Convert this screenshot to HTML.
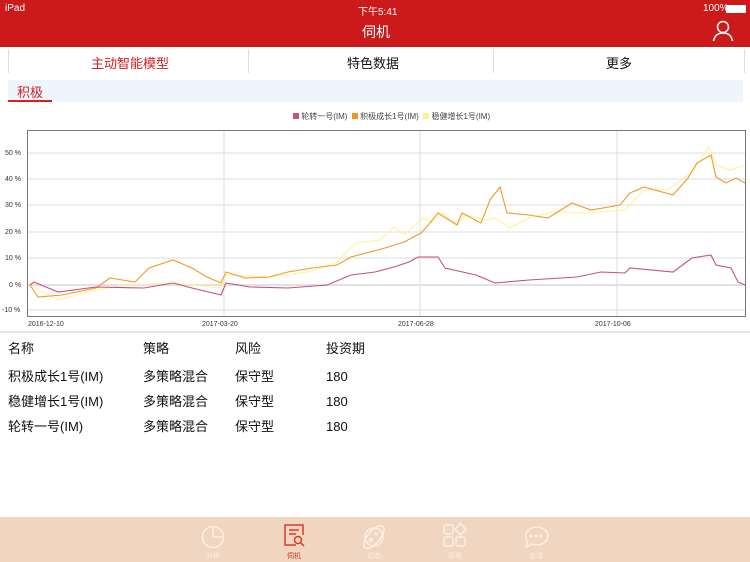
<!DOCTYPE html><html><head><meta charset="utf-8"><style>
*{margin:0;padding:0;box-sizing:border-box}
body{width:750px;height:562px;overflow:hidden;background:#fff;font-family:"Liberation Sans","Noto Sans CJK SC",sans-serif;position:relative;color:#111}
.a{position:absolute;white-space:nowrap}
</style></head><body>
<div class="a" style="left:0;top:0;width:750px;height:47px;background:#cc1a1a"></div>
<div class="a" style="left:5px;top:3px;font-size:10px;color:#fff">iPad</div>
<div class="a" style="left:358px;top:3px;font-size:10px;color:#fff">下午5:41</div>
<div class="a" style="left:703px;top:3px;font-size:10px;color:#fff">100%</div>
<div class="a" style="left:726px;top:5px;width:20px;height:8px;background:#fff;border-radius:1px"></div>
<div class="a" style="left:362px;top:22px;font-size:14px;color:#fff">伺机</div>
<svg class="a" style="left:712px;top:20px" width="22" height="22" viewBox="0 0 22 22" fill="none" stroke="#fff" stroke-width="1.5"><circle cx="11" cy="7" r="5.5"/><path d="M1.5 21 Q3 13 11 13 Q19 13 20.5 21"/></svg>
<div class="a" style="left:8px;top:49px;width:737px;height:24px;border-left:1px solid #ddd;border-right:1px solid #ddd"></div>
<div class="a" style="left:248px;top:49px;width:1px;height:24px;background:#ddd"></div>
<div class="a" style="left:493px;top:49px;width:1px;height:24px;background:#ddd"></div>
<div class="a" style="left:91px;top:53px;font-size:13px;color:#d42020">主动智能模型</div>
<div class="a" style="left:347px;top:53px;font-size:13px">特色数据</div>
<div class="a" style="left:606px;top:53px;font-size:13px">更多</div>
<div class="a" style="left:8px;top:80px;width:735px;height:22px;background:#eff5fc"></div>
<div class="a" style="left:17px;top:82px;font-size:13px;color:#d42020">积极</div>
<div class="a" style="left:8px;top:100px;width:44px;height:2px;background:#d42020"></div>
<div class="a" style="left:293px;top:111px;font-size:8px;color:#444"><span style="display:inline-block;width:6px;height:6px;background:#c8507d"></span> 轮转一号(IM) &nbsp;<span style="display:inline-block;width:6px;height:6px;background:#f0961e"></span> 积极成长1号(IM) &nbsp;<span style="display:inline-block;width:6px;height:6px;background:#fff08a"></span> 稳健增长1号(IM)</div>
<svg class="a" style="left:0;top:0" width="750" height="335">
<g stroke="#ddd" stroke-width="1"><line x1="27" y1="153" x2="745" y2="153"/><line x1="27" y1="179" x2="745" y2="179"/><line x1="27" y1="205" x2="745" y2="205"/><line x1="27" y1="232" x2="745" y2="232"/><line x1="27" y1="258" x2="745" y2="258"/><line x1="27" y1="310" x2="745" y2="310"/><line x1="224" y1="131" x2="224" y2="316"/><line x1="420" y1="131" x2="420" y2="316"/><line x1="617" y1="131" x2="617" y2="316"/></g>
<line x1="27" y1="285" x2="745" y2="285" stroke="#e2e2e2" stroke-width="2"/>
<rect x="27.5" y="130.5" width="718" height="186" fill="none" stroke="#777"/>
<line x1="0" y1="332" x2="750" y2="332" stroke="#ccc"/>
<g font-size="7" fill="#333" font-family="Liberation Sans"><text x="5" y="155">50 %</text><text x="5" y="181">40 %</text><text x="5" y="207">30 %</text><text x="5" y="234">20 %</text><text x="5" y="260">10 %</text><text x="9" y="287">0 %</text><text x="2" y="312">-10 %</text>
<text x="28" y="326">2016-12-10</text><text x="202" y="326">2017-03-20</text><text x="398" y="326">2017-06-28</text><text x="595" y="326">2017-10-06</text></g>
<g fill="none" stroke-width="1.1">
<polyline stroke="#fff29a" points="30,285 58,300 96,290 125,285 173,283 221,288 226,275 269,277 308,272 337,262 356,243 380,240 394,227 404,235 423,218 433,222 442,213 457,225 466,215 486,220 495,218 510,228 529,218 553,212 591,213 625,210 644,190 668,190 692,172 709,147 716,165 731,170 745,165"/>
<polyline stroke="#f09a2a" points="30,285 38,297 62,295 96,288 110,278 135,282 149,268 173,260 192,268 207,277 221,283 226,272 245,278 269,277 288,272 312,268 337,265 351,257 385,248 404,242 421,233 430,223 438,213 457,225 462,213 481,223 490,200 500,187 507,213 529,215 548,218 572,203 591,210 620,205 630,193 644,187 673,195 688,178 697,163 711,155 716,177 726,183 736,178 745,183"/>
<polyline stroke="#c8507d" points="30,285 34,282 58,292 96,287 144,288 173,283 192,288 221,295 226,283 250,287 288,288 327,285 351,275 375,272 394,267 409,262 418,257 438,257 445,268 476,275 495,283 529,280 577,277 601,272 625,273 630,268 673,272 692,258 711,255 716,265 731,268 738,282 745,285"/>
</g></svg>
<div class="a" style="top:340px;left:8px;font-size:13px;line-height:18px">名称<br><span style="display:block;margin-top:10px">积极成长1号(IM)</span><span style="display:block;margin-top:7px">稳健增长1号(IM)</span><span style="display:block;margin-top:7px">轮转一号(IM)</span></div>
<div class="a" style="top:340px;left:143px;font-size:13px;line-height:18px">策略<br><span style="display:block;margin-top:10px">多策略混合</span><span style="display:block;margin-top:7px">多策略混合</span><span style="display:block;margin-top:7px">多策略混合</span></div>
<div class="a" style="top:340px;left:235px;font-size:13px;line-height:18px">风险<br><span style="display:block;margin-top:10px">保守型</span><span style="display:block;margin-top:7px">保守型</span><span style="display:block;margin-top:7px">保守型</span></div>
<div class="a" style="top:340px;left:326px;font-size:13px;line-height:18px">投资期<br><span style="display:block;margin-top:10px">180</span><span style="display:block;margin-top:7px">180</span><span style="display:block;margin-top:7px">180</span></div>
<div class="a" style="left:0;top:517px;width:750px;height:45px;background:#f0d6c1"></div>
<svg class="a" style="left:0;top:517px" width="750" height="45" fill="none" stroke-width="1.5">
<g stroke="#fbeee3"><circle cx="213" cy="20" r="10.5"/><path d="M213 9.5 V20 H223.5"/>
<circle cx="374" cy="20" r="9"/><ellipse cx="374" cy="20" rx="14" ry="6" transform="rotate(-50 374 20)"/><circle cx="371" cy="23" r="1.5"/><circle cx="376" cy="17" r="1"/>
<rect x="444" y="8" width="9" height="9" rx="2"/><rect x="444" y="20" width="9" height="9" rx="2"/><rect x="456" y="20" width="9" height="9" rx="2"/><path d="M460.5 6.5 L466 12.5 L460.5 18 L455 12.5Z"/>
<path d="M536 10 a11 9 0 1 1 -4 17 l-6 3 l1.5 -6 a11 9 0 0 1 8.5 -14z"/><circle cx="531" cy="19" r=".8"/><circle cx="536" cy="19" r=".8"/><circle cx="541" cy="19" r=".8"/></g>
<path stroke="#d83a2c" d="M303 18 V8 H285 V28 H296 M289 13 H299 M289 17 H296"/><circle cx="298" cy="23" r="3.5" stroke="#d83a2c"/><path stroke="#d83a2c" d="M300.5 25.5 L304 29"/>
<g font-size="7" stroke="none" font-family="Liberation Sans,Noto Sans CJK SC"><text x="206" y="41" fill="#fbeee3">分析</text><text x="287" y="41" fill="#d83a2c">伺机</text><text x="367" y="41" fill="#fbeee3">动态</text><text x="448" y="41" fill="#fbeee3">管理</text><text x="529" y="41" fill="#fbeee3">会话</text></g>
</svg>
</body></html>
